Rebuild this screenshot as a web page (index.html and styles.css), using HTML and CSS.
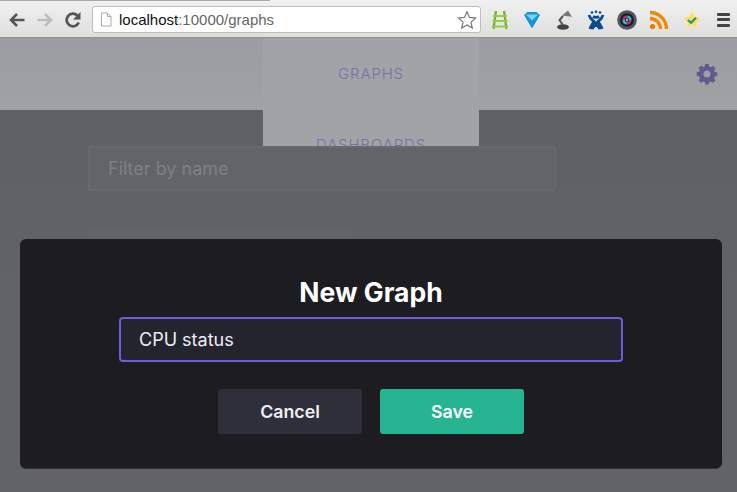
FILE: index.html
```html
<!DOCTYPE html>
<html lang="en">
<head>
<meta charset="utf-8">
<title>Graphs</title>
<link rel="stylesheet" href="styles.css">
</head>
<body>
<div class="chrome">
  <div class="tabstrip"><span class="tab-edge"></span></div>
  <div class="toolbar">
    <svg class="nav-icon" viewBox="0 0 18 18"><path d="M16.500 9H4M9 3 3 9 9 15" fill="none" stroke="#555" stroke-width="2.600"/></svg>
    <svg class="nav-icon" viewBox="0 0 18 18"><path d="M1.500 9H14M9 3 15 9 9 15" fill="none" stroke="#bdbdbd" stroke-width="2.600"/></svg>
    <svg class="nav-icon" viewBox="0 0 18 18"><path d="M14.700 11.500A6.300 6.300 0 1 1 13.500 4.700" fill="none" stroke="#555" stroke-width="2.800"/><path d="M16.500 1V8.500H9Z" fill="#555"/></svg>
    <div class="omnibox">
      <svg class="page-icon" viewBox="0 0 12 15"><path d="M1.500 1h6l3.500 3.500V14h-9.500Z M7.500 1v3.500H11" fill="#fff" stroke="#aaa"/></svg>
      <span class="url"><span class="host">localhost</span>:10000/graphs</span>
      <svg class="star" viewBox="0 0 20 20"><path d="M10 1.800 12.500 7.400 18.600 8 14 12.100 15.300 18.100 10 15 4.700 18.100 6 12.100 1.400 8 7.500 7.400Z" fill="#fff" stroke="#777" stroke-width="1.200"/></svg>
    </div>
    <div class="extensions">
      <svg class="ext" viewBox="0 0 18 20"><path d="M5 1 2.500 19M13 1l2.500 18" fill="none" stroke="#6fb51a" stroke-width="2.200"/><path d="M2 6h14M1.500 11h15M1 16.500h16" fill="none" stroke="#94cc4a" stroke-width="2.200"/></svg>
      <svg class="ext" viewBox="0 0 18 20"><path d="M.5 5 4.500 1.500h9L17.500 5 9 19.500Z" fill="#1b93d8"/><path d="M3 4.500h12L9 10.500Z" fill="#7fd0f5"/><path d="M.5 5 4.500 1.500h9L17.500 5 9 19.500Z" fill="none" stroke="#fff" stroke-width=".8"/></svg>
      <svg class="ext" viewBox="0 0 18 20"><ellipse cx="8" cy="17" rx="6" ry="2.800" fill="#444"/><path d="M8 15 4.500 10 8 6" fill="none" stroke="#555" stroke-width="2"/><path d="M7 5.500 13 .5 17 7Z" fill="#777"/><circle cx="14.500" cy="8" r="1.800" fill="#ddd"/></svg>
      <svg class="ext" viewBox="0 0 18 20"><circle cx="5" cy="2.500" r="1.300" fill="#0b4a8c"/><circle cx="9" cy="1.800" r="1.300" fill="#0b4a8c"/><circle cx="13" cy="2.500" r="1.300" fill="#0b4a8c"/><path d="M2 5C3 9 6 10.500 7 11.500 5.500 14 4 15.500 3 19M16 5C15 9 12 10.500 11 11.500 12.500 14 14 15.500 15 19M6 6.500c1.500 1 4.500 1 6 0M7 11.500 13 19M11 11.500 5 19" fill="none" stroke="#0b4a8c" stroke-width="2.800"/></svg>
      <svg class="ext ext-lens" viewBox="0 0 20 20"><circle cx="10" cy="10" r="9.800" fill="#54565b"/><circle cx="10" cy="10" r="6.800" fill="#1c1c24"/><circle cx="10" cy="10" r="3.400" fill="none" stroke="#e0189c" stroke-width="2.400" stroke-dasharray="5.300 5.400"/><circle cx="10" cy="10" r="3.400" fill="none" stroke="#19c4e0" stroke-width="2.400" stroke-dasharray="5.300 5.400" stroke-dashoffset="5.300"/><circle cx="10" cy="10" r="1.400" fill="#7ed321"/></svg>
      <svg class="ext ext-rss" viewBox="0 0 20 20"><circle cx="3.500" cy="16.500" r="2.600" fill="#e87a00"/><path d="M1 8.500A10.500 10.500 0 0 1 11.500 19M1 2.500A16.500 16.500 0 0 1 17.500 19" fill="none" stroke="#f08a00" stroke-width="3.400"/></svg>
      <svg class="ext ext-badge" viewBox="0 0 20 20"><path d="M10 .5 12.900 6.600 19.500 7.500 14.700 12 16 18.500 10 15.400 4 18.500 5.300 12 .5 7.500 7.100 6.600Z" fill="#fbdc6e" stroke="#f6edc0"/><path d="M6 10 9 12.800 14 7.800" fill="none" stroke="#1f9b74" stroke-width="2.200"/></svg>
    </div>
    <div class="menu-bars"><span></span><span></span><span></span></div>
  </div>
</div>

<div class="app">
  <header class="app-header">
    <svg class="gear" viewBox="0 0 20 20"><path fill-rule="evenodd" d="M8.300 0h3.400l.5 2.500 1.700.7 2.200-1.400 2.400 2.400-1.400 2.200.7 1.700 2.500.5v3.400l-2.500.5-.7 1.700 1.400 2.200-2.400 2.400-2.200-1.400-1.700.7-.5 2.500H8.300l-.5-2.500-1.700-.7-2.200 1.400-2.400-2.400 1.400-2.200-.7-1.700L-.3 11.700V8.300l2.500-.5.7-1.700L1.500 3.900l2.400-2.400 2.200 1.400 1.700-.7ZM10 6.500a3.500 3.500 0 1 0 0 7 3.500 3.500 0 0 0 0-7Z" fill="#5f5b8f"/></svg>
  </header>
  <nav class="tabs">
    <a class="tab">GRAPHS</a>
    <a class="tab">DASHBOARDS</a>
  </nav>
  <main class="content">
    <div class="filter">Filter by name</div>
    <div class="card"></div>
  </main>
</div>

<div class="overlay">
  <section class="modal">
    <h1 class="modal-title">New Graph</h1>
    <div class="name-input">CPU status</div>
    <div class="actions">
      <button class="btn btn-cancel">Cancel</button>
      <button class="btn btn-save">Save</button>
    </div>
  </section>
</div>
</body>
</html>
```
FILE: styles.css
```css
* { box-sizing: border-box; }
html, body { margin: 0; height: 100%; overflow: hidden; }
body { width: 737px; height: 492px; position: relative; font-family: Inter, "Liberation Sans", sans-serif; background: #616266; display: flex; flex-direction: column; }

.chrome { height: 38px; flex: none; background: linear-gradient(#f1f1f1, #dedede); border-bottom: 1px solid #8f8f8f; }
.tabstrip { height: 2px; position: relative; }
.tab-edge { display: block; width: 270px; height: 1px; background: #a8a8a8; }
.toolbar { display: flex; align-items: center; height: 35px; padding: 0 0 0 8px; }
.nav-icon { width: 18px; height: 18px; margin-right: 10px; flex: none; }
.omnibox { width: 389px; height: 27px; background: #fff; border: 1px solid #bdbdbd; border-radius: 3px; display: flex; align-items: center; padding: 0 3px 0 7px; flex: none; }
.page-icon { width: 12px; height: 15px; margin-right: 7px; flex: none; }
.url { font-family: "Liberation Sans", sans-serif; font-size: 15px; color: #666; flex: 1; white-space: nowrap; }
.host { color: #111; }
.star { width: 20px; height: 20px; flex: none; }
.extensions { display: flex; align-items: center; margin-left: 10px; gap: 14px; }
.ext { width: 18px; height: 20px; flex: none; }
.ext-lens { width: 20px; margin-left: -2px; }
.ext-rss { width: 20px; margin-left: -2px; }
.ext-badge { width: 20px; margin-left: -1px; }
.menu-bars { margin-left: 15px; display: flex; flex-direction: column; gap: 2.500px; width: 13px; flex: none; }
.menu-bars span { display: block; height: 3px; background: #444; border-radius: 1px; }

.app { flex: 1; position: relative; display: flex; flex-direction: column; min-height: 0; }
.app-header { height: 72px; flex: none; background: linear-gradient(#9c9da1, #a0a1a5); display: flex; justify-content: flex-end; align-items: center; padding-right: 20px; }
.gear { width: 20px; height: 20px; overflow: visible; margin-top: -1px; }

.tabs { position: absolute; left: 263px; top: 0; width: 216px; height: 108px; background: #a2a3a6; display: flex; flex-direction: column; z-index: 1; overflow: hidden; }
.tab { height: 71px; flex: none; display: flex; align-items: center; justify-content: center; font-size: 15px; font-weight: 300; letter-spacing: .85px; color: #7472a6; }

.content { flex: 1; padding: 36px 181px 0 88px; background: linear-gradient(#5f6064, #626367 200px); position: relative; }
.filter { position: relative; z-index: 2; height: 45px; background: #636468; border: 2px solid #68696d; border-radius: 3px; padding-left: 18px; display: flex; align-items: center; font-size: 18px; color: #7f8084; }
.card { width: 264px; height: 40px; margin-top: 36px; background: #636468; border-radius: 3px; }

.overlay { position: absolute; inset: 0; z-index: 5; padding: 239px 15px 0 20px; }
.modal { height: 230px; background: #1c1c21; border-radius: 6px; border-bottom: 1px solid #36363c; padding-top: 37px; display: flex; flex-direction: column; align-items: center; }
.modal-title { margin: 0; font-size: 26.500px; line-height: 32px; font-weight: 700; color: #fff; }
.name-input { width: 504px; height: 45px; margin-top: 9px; background: #24242e; border: 2px solid #6c5ce0; border-radius: 4px; padding-left: 18px; display: flex; align-items: center; font-size: 18px; color: #eeeef0; }
.actions { display: flex; gap: 18px; margin-top: 27px; }
.btn { width: 144px; height: 45px; border: 0; border-radius: 3px; font-family: inherit; font-size: 17.800px; font-weight: 600; padding: 0; }
.btn-cancel { background: #2f2f3b; color: #eeeef0; }
.btn-save { background: #26b493; color: #fff; }
```
